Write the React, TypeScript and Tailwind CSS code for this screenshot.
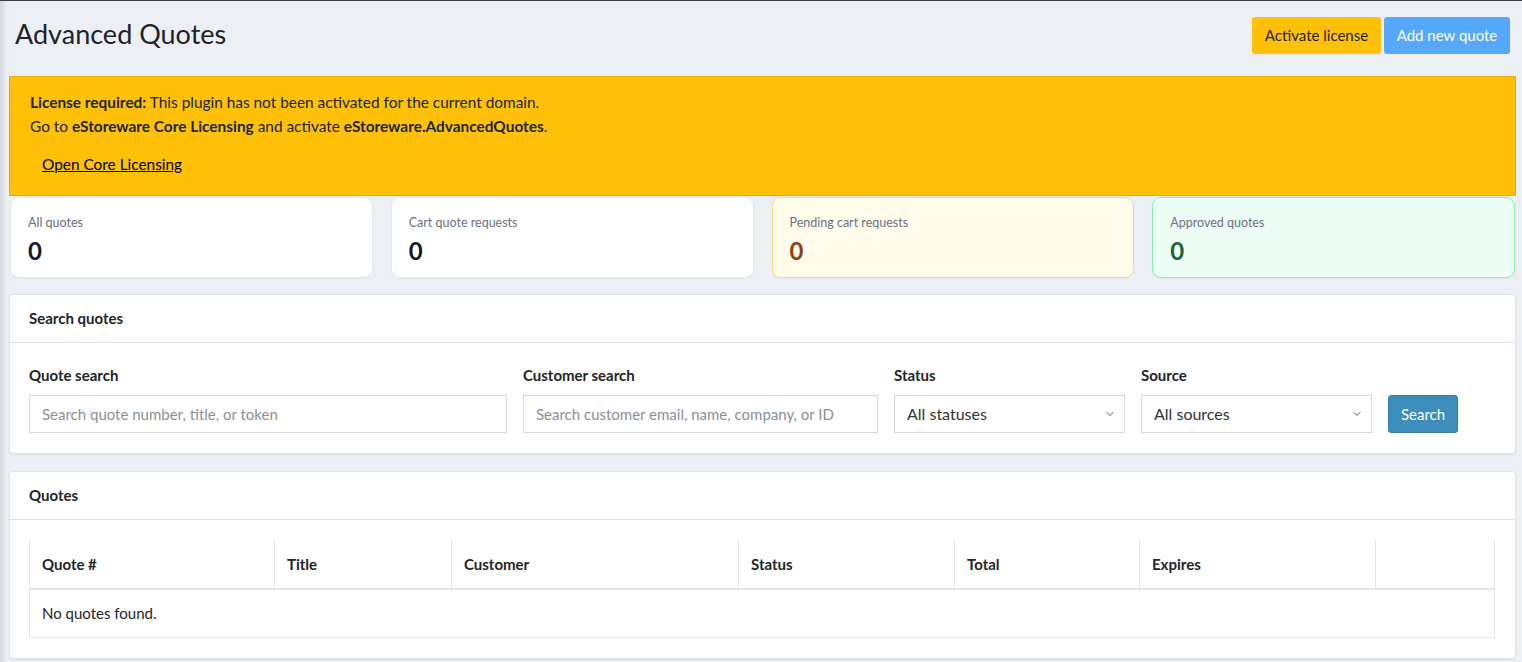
import { ChevronDown } from 'lucide-react'

const STATS = [
  { label: 'All quotes', value: '0', box: 'bg-white border-[#e5e7eb]', num: 'text-[#111827]' },
  { label: 'Cart quote requests', value: '0', box: 'bg-white border-[#e5e7eb]', num: 'text-[#111827]' },
  { label: 'Pending cart requests', value: '0', box: 'bg-[#fffbeb] border-[#fcd988]', num: 'text-[#92400e]' },
  { label: 'Approved quotes', value: '0', box: 'bg-[#ecfdf5] border-[#86efac]', num: 'text-[#166534]' },
]

const COLUMNS = [
  { name: 'Quote #', w: 'w-[245px]' },
  { name: 'Title', w: 'w-[177px]' },
  { name: 'Customer', w: 'w-[287px]' },
  { name: 'Status', w: 'w-[216px]' },
  { name: 'Total', w: 'w-[185px]' },
  { name: 'Expires', w: 'w-[236px]' },
  { name: '', w: '' },
]

function Select({ value, width }: { value: string; width: string }) {
  return (
    <div className={`${width} h-[38px] border border-[#d2d6de] bg-white flex items-center justify-between pl-3 pr-2 text-[16px] text-[#333]`}>
      <span>{value}</span>
      <ChevronDown size={12} strokeWidth={2} className="text-[#555]" />
    </div>
  )
}

export default function App() {
  return (
    <div
      className="min-h-screen border-t border-[#3a3e43] bg-[linear-gradient(to_right,#d3d7dd,#e6e9ee_5px,#ecf0f5_9px)] pl-[9px] pr-[6px] text-[#212529]"
      style={{ fontFamily: 'Lato, "Liberation Sans", sans-serif' }}
    >
      {/* Header */}
      <div className="flex items-start justify-between pl-[6px] pr-[6px] pt-[15px] h-[75px]">
        <h1 className="text-[27px] leading-[36px] text-[#1f2329] font-normal">Advanced Quotes</h1>
        <div className="flex gap-[3px] pt-[1px]">
          <button className="h-[37px] w-[129px] rounded-[3px] bg-[#ffc107] text-[15px] text-[#212529]">Activate license</button>
          <button className="h-[37px] w-[126px] rounded-[3px] bg-[#56a8fc] text-[15px] text-white">Add new quote</button>
        </div>
      </div>

      {/* License alert */}
      <div className="h-[120px] bg-[#ffc107] border border-[#e8ad00] px-[20px] pt-[13px] text-[15.4px] text-[#212529]">
        <p className="leading-[24px]">
          <b>License required:</b> This plugin has not been activated for the current domain.
        </p>
        <p className="leading-[24px]">
          Go to <b>eStoreware Core Licensing</b> and activate <b>eStoreware.AdvancedQuotes</b>.
        </p>
        <a className="inline-block mt-[14px] ml-[12px] underline text-black leading-[24px]">Open Core Licensing</a>
      </div>

      {/* Stats */}
      <div className="grid grid-cols-4 gap-[18px] mt-[1px] pl-[1px] pr-[1px]">
        {STATS.map((s) => (
          <div key={s.label} className={`h-[81px] rounded-[9px] border ${s.box} px-[17px] pt-[16px] shadow-[0_1px_2px_rgba(0,0,0,0.04)]`}>
            <p className="text-[12.5px] leading-[18px] text-[#6b7280]">{s.label}</p>
            <p className={`text-[24px] leading-[30px] font-bold mt-[4px] ${s.num}`}>{s.value}</p>
          </div>
        ))}
      </div>

      {/* Search card */}
      <div className="mt-[16px] bg-white rounded-[4px] border border-[#dfe2e6] shadow-[0_1px_2px_rgba(0,0,0,0.08)]">
        <div className="h-[48px] flex items-center px-[19px] border-b border-[#dcdfe3] text-[15px] font-bold">Search quotes</div>
        <div className="flex items-end gap-[16px] px-[19px] pt-[22px] pb-[20px]">
          <div className="flex flex-col gap-[10px]">
            <label className="text-[15px] font-bold leading-[20px]">Quote search</label>
            <div className="w-[478px] h-[38px] border border-[#d2d6de] flex items-center px-3 text-[15px] text-[#8a9099]">
              Search quote number, title, or token
            </div>
          </div>
          <div className="flex flex-col gap-[10px]">
            <label className="text-[15px] font-bold leading-[20px]">Customer search</label>
            <div className="w-[355px] h-[38px] border border-[#d2d6de] flex items-center px-3 text-[15px] text-[#8a9099]">
              Search customer email, name, company, or ID
            </div>
          </div>
          <div className="flex flex-col gap-[10px]">
            <label className="text-[15px] font-bold leading-[20px]">Status</label>
            <Select value="All statuses" width="w-[231px]" />
          </div>
          <div className="flex flex-col gap-[10px]">
            <label className="text-[15px] font-bold leading-[20px]">Source</label>
            <Select value="All sources" width="w-[231px]" />
          </div>
          <button className="h-[38px] w-[70px] rounded-[3px] bg-[#3c8dbc] border border-[#367fa9] text-white text-[15px]">Search</button>
        </div>
      </div>

      {/* Quotes card */}
      <div className="mt-[17px] bg-white rounded-[4px] border border-[#dfe2e6] shadow-[0_1px_2px_rgba(0,0,0,0.08)]">
        <div className="h-[48px] flex items-center px-[19px] border-b border-[#dcdfe3] text-[15px] font-bold">Quotes</div>
        <div className="px-[19px] pt-[20px] pb-[20px] pr-[20px]">
          <table className="w-full border-collapse text-[15px]">
            <thead>
              <tr>
                {COLUMNS.map((c, i) => (
                  <th
                    key={i}
                    className={`${c.w} h-[49px] text-left font-bold px-[12px] border-x border-[#e3e5e8] border-b-2 border-b-[#e3e5e8]`}
                  >
                    {c.name}
                  </th>
                ))}
              </tr>
            </thead>
            <tbody>
              <tr>
                <td colSpan={7} className="h-[48px] px-[12px] border border-[#e3e5e8] text-[15px]">
                  No quotes found.
                </td>
              </tr>
            </tbody>
          </table>
        </div>
      </div>
    </div>
  )
}
